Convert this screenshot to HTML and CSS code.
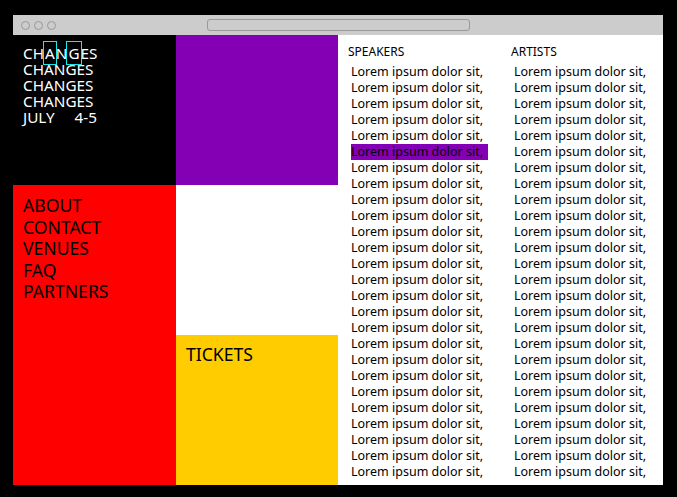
FILE: index.html
```html
<!DOCTYPE html>
<html>
<head>
<meta charset="utf-8">
<link rel="stylesheet" href="styles.css">
</head>
<body>
<div class="window">
  <div class="chrome">
    <div class="dots"><span class="dot"></span><span class="dot"></span><span class="dot"></span></div>
    <div class="address"></div>
    <div></div>
  </div>
  <div class="page">
    <div class="brand">
      <div>CH<span class="box">A</span>N<span class="box">G</span>ES</div>
      <div>CHANGES</div>
      <div>CHANGES</div>
      <div>CHANGES</div>
      <div>JULY&nbsp;&nbsp;&nbsp;&nbsp; 4-5</div>
    </div>
    <div class="purple"></div>
    <div class="list-col speakers">
      <div class="list-head">SPEAKERS</div>
      <ul class="items" id="speakers"></ul>
    </div>
    <div class="list-col artists">
      <div class="list-head">ARTISTS</div>
      <ul class="items" id="artists"></ul>
    </div>
    <nav class="nav">
      <div>ABOUT</div>
      <div>CONTACT</div>
      <div>VENUES</div>
      <div>FAQ</div>
      <div>PARTNERS</div>
    </nav>
    <div class="blank"></div>
    <div class="tickets">TICKETS</div>
  </div>
</div>
<script>
  ['speakers','artists'].forEach(function(id){
    var ul=document.getElementById(id);
    for(var i=0;i<26;i++){
      var li=document.createElement('li');
      li.textContent='Lorem ipsum dolor sit,';
      if(id==='speakers'&&i===5) li.className='active';
      ul.appendChild(li);
    }
  });
</script>
</body>
</html>
```
FILE: styles.css
```css
html, body {
  margin: 0;
  padding: 0;
  background: #000;
}
body {
  width: 677px;
  height: 497px;
  overflow: hidden;
  font-family: "Noto Sans", "Open Sans", sans-serif;
}
.window {
  margin: 15px 0 0 13px;
  width: 650px;
}
.chrome {
  height: 20px;
  background: #cccccc;
  display: grid;
  grid-template-columns: 1fr 264px 1fr;
  align-items: center;
}
.dots {
  display: flex;
  gap: 4px;
  padding-left: 8px;
}
.dot {
  width: 7px;
  height: 7px;
  border: 1px solid #999;
  border-radius: 50%;
  margin-top: 1px;
}
.address {
  height: 10px;
  border: 1px solid #999;
  border-radius: 3px;
  margin-left: 1px;
}
.page {
  display: grid;
  grid-template-columns: 163px 162px 163px 162px;
  grid-template-rows: 150px 150px 150px;
  height: 450px;
  background: #fff;
  overflow: hidden;
}
.brand {
  grid-column: 1;
  grid-row: 1;
  background: #000;
  color: #fff;
  font-size: 15.3px;
  line-height: 16px;
  padding: 10px 10px;
}
.box {
  outline: 1px solid #18e8f0;
  outline-offset: 0;
  padding: 1px 1px;
}
.purple {
  grid-column: 2;
  grid-row: 1;
  background: #8400b4;
}
.nav {
  grid-column: 1;
  grid-row: 2 / 4;
  background: #ff0000;
  color: #000;
  font-size: 17.6px;
  line-height: 21.5px;
  padding: 10px 10px;
}
.blank {
  grid-column: 2;
  grid-row: 2;
  background: #fff;
}
.tickets {
  grid-column: 2;
  grid-row: 3;
  background: #ffcc00;
  color: #000;
  font-size: 17.6px;
  line-height: 21px;
  padding: 9px 10px;
}
.list-col {
  grid-row: 1 / 4;
  background: #fff;
  padding: 9px 0 0 10px;
  overflow: hidden;
}
.speakers { grid-column: 3; }
.artists { grid-column: 4; }
.list-head {
  font-size: 12px;
  line-height: 16px;
  color: #000;
}
.items {
  list-style: none;
  margin: 4px 13px 0 3px;
  padding: 0;
  font-size: 12.5px;
  line-height: 16px;
  color: #000;
}
.items li {
  white-space: nowrap;
}
.items li.active {
  background: #8400b4;
}
```
